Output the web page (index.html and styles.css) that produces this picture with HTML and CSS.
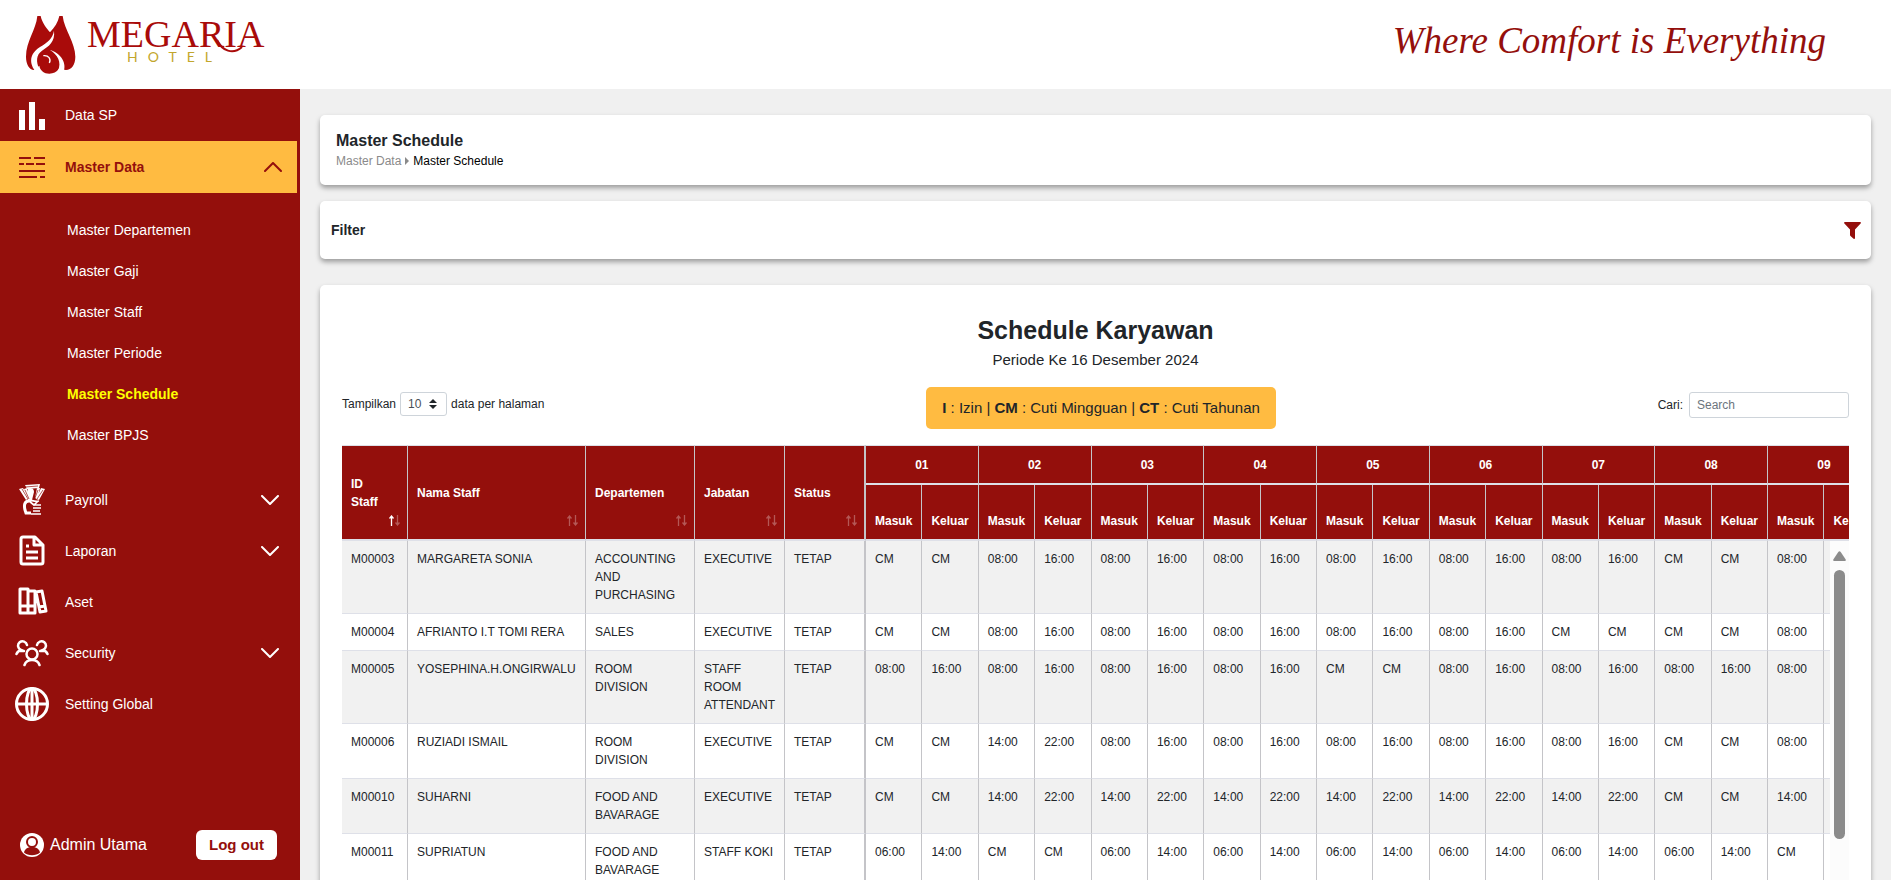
FILE: index.html
```html
<!DOCTYPE html>
<html lang="id">
<head>
<meta charset="utf-8">
<meta name="viewport" content="width=device-width, initial-scale=1">
<title>Master Schedule - Megaria Hotel</title>
<link rel="stylesheet" href="styles.css">
</head>
<body>
<svg class="sprite" aria-hidden="true">
  <symbol id="chevron" viewBox="0 0 18 10"><path d="M1 1l8 8 8-8" fill="none" stroke="currentColor" stroke-width="2" stroke-linecap="round" stroke-linejoin="round"/></symbol>
  <symbol id="sort-up" viewBox="0 0 5 11"><path d="M2.5 11V1M0.5 3.5l2-2.5 2 2.5" fill="none" stroke="currentColor" stroke-width="1.3"/></symbol>
  <symbol id="sort-down" viewBox="0 0 5 11"><path d="M2.5 0v10M0.5 7.5l2 2.5 2-2.5" fill="none" stroke="currentColor" stroke-width="1.3"/></symbol>
</svg>

<header class="topbar">
  <svg class="logo" viewBox="0 0 250 89" role="img" aria-label="Megaria Hotel">
    <g transform="translate(-5 10) scale(.33333)">
      <path d="M52 18h10c4 20 18 37 28 49 14-15 24-30 28-49h10c5 42 38 80 38 122 0 24-12 40-28 40l-22-3c-6 9-16 14-28 14-16 0-28-10-30-24l-16 13c-14 0-24-18-24-40 0-46 30-80 34-122z" fill="#a90b0a"/>
      <path d="M46 184C22 152 36 126 60 111c22-13 38-25 42-49 4 33-16 47-36 60-18 13-18 32-8 56z" fill="#fff"/>
      <path d="M114 182c12-26-2-48-24-62 28 8 50 34 42 62z" fill="#fff"/>
      <path d="M70 137c16-2 24 10 18 22" fill="none" stroke="#fff" stroke-width="4"/>
    </g>
    <text class="logo-name" x="62" y="47">MEGARIA</text>
    <text class="logo-kind" x="102" y="62">HOTEL</text>
    <path d="M192 40c5 11 16 15 25 7" fill="none" stroke="#a90b0a" stroke-width="2"/>
  </svg>
  <p class="slogan">Where Comfort is Everything</p>
</header>

<div class="shell">
  <aside class="sidebar">
    <nav class="menu" aria-label="Menu utama">
      <a class="item" href="#sp">
        <svg class="icon" viewBox="0 0 34 34"><path d="M4 12h6v20H4zM14 4h6v28h-6zM24 21h6v11h-6z" fill="currentColor"/></svg>
        <span>Data SP</span>
      </a>
      <button class="item item-open" type="button" aria-expanded="true">
        <svg class="icon" viewBox="0 0 34 34"><path d="M4 8h12M19 8h11M4 14h5M11 14h8M21 14h9M4 21h26M4 27h18M25 27h5" stroke="currentColor" stroke-width="2"/></svg>
        <span>Master Data</span>
        <svg class="chevron chevron-up"><use href="#chevron"/></svg>
      </button>
      <ul class="submenu">
        <li><a href="#departemen">Master Departemen</a></li>
        <li><a href="#gaji">Master Gaji</a></li>
        <li><a href="#staff">Master Staff</a></li>
        <li><a href="#periode">Master Periode</a></li>
        <li><a class="current" href="#schedule" aria-current="page">Master Schedule</a></li>
        <li><a href="#bpjs">Master BPJS</a></li>
      </ul>
      <button class="item" type="button" aria-expanded="false">
        <svg class="icon" viewBox="0 0 34 34">
          <path d="M10 2l15-1-1 4-12 1zM4 6l4-1 6 10-3 2zM30 6l-4-1-5 11 3 1zM9 6l3-1 3 11-2 1zM25 5l-3 0-2 10 2 1zM13 6c4-2 6 0 6 3l-2 8h-4z" fill="currentColor"/>
          <path d="M10 4l13-1M7 6l6 10M10 7l4 9M28 7l-6 9M23 7l-3 8" stroke="#940f0c" stroke-width=".7"/>
          <path d="M14 18c-5 0-5 5-4 9l1 3h5" fill="none" stroke="currentColor" stroke-width="3"/>
          <path d="M13 17c4 0 6 2 11 1M14 18l5 4 4-4M18 22h8M18 25h8M18 28h7M16 31h10" stroke="currentColor" stroke-width="1.700" fill="none"/>
        </svg>
        <span>Payroll</span>
        <svg class="chevron"><use href="#chevron"/></svg>
      </button>
      <button class="item" type="button" aria-expanded="false">
        <svg class="icon" viewBox="0 0 34 34">
          <path d="M8 3h12l8 8v17a2 2 0 0 1-2 2H8a2 2 0 0 1-2-2V5a2 2 0 0 1 2-2zM19 3v8h9" fill="none" stroke="currentColor" stroke-width="3" stroke-linejoin="round"/>
          <path d="M11 12h3M11 18h12M11 24h12" stroke="currentColor" stroke-width="3"/>
        </svg>
        <span>Laporan</span>
        <svg class="chevron"><use href="#chevron"/></svg>
      </button>
      <a class="item" href="#aset">
        <svg class="icon" viewBox="0 0 34 34">
          <path d="M5 4h8v24H5zM13 6h7v22h-7zM5 21h15M21 7l6-1 4 20-6 1zM24 22l6-1" fill="none" stroke="currentColor" stroke-width="3" stroke-linejoin="round"/>
        </svg>
        <span>Aset</span>
      </a>
      <button class="item" type="button" aria-expanded="false">
        <svg class="icon" viewBox="0 0 34 34">
          <g fill="none" stroke="currentColor" stroke-width="2.500" stroke-linecap="round">
            <circle cx="17" cy="18" r="5.500"/>
            <path d="M9.500 29c1-3 4-5 7.500-5s6.500 2 7.500 5M12 9A4.500 4.500 0 1 0 6 14c-2 .5-3.500 1.500-4.500 4M5 15h4M22 9a4.500 4.500 0 1 1 6 5c2 .5 3.500 1.500 4.500 4M29 15h-4"/>
          </g>
        </svg>
        <span>Security</span>
        <svg class="chevron"><use href="#chevron"/></svg>
      </button>
      <a class="item" href="#setting">
        <svg class="icon" viewBox="0 0 34 34">
          <g fill="none" stroke="currentColor" stroke-width="3"><circle cx="17" cy="17" r="15.500"/><ellipse cx="17" cy="17" rx="5.500" ry="15.500"/><path d="M17 1v32M1 17h32"/></g>
        </svg>
        <span>Setting Global</span>
      </a>
    </nav>
    <div class="account">
      <svg class="avatar" viewBox="0 0 24 24"><circle cx="12" cy="12" r="12" fill="#fff"/><path d="M4 19.500c1-4 4-5.500 8-5.500s7 1.500 8 5.500c-4 3.600-12 3.600-16 0z" fill="#940f0c"/><circle cx="12" cy="9" r="5" fill="#fff" stroke="#940f0c" stroke-width="2"/></svg>
      <span class="user">Admin Utama</span>
      <button class="logout" type="button">Log out</button>
    </div>
  </aside>

  <main class="content">
    <section class="card page-head">
      <h1>Master Schedule</h1>
      <nav class="crumbs" aria-label="Breadcrumb">
        <a href="#master">Master Data</a>
        <svg class="crumb-arrow" viewBox="0 0 4 8"><path d="M0 0l4 4-4 4z" fill="currentColor"/></svg>
        <span>Master Schedule</span>
      </nav>
    </section>

    <section class="card filter">
      <h2>Filter</h2>
      <button class="filter-toggle" type="button" aria-label="Buka filter">
        <svg viewBox="0 0 17 17"><path d="M1 0h15c1 0 1.200 1 .6 1.600L11 7.500V16c0 1-.8 1.200-1.400.7L6.500 14c-.3-.3-.5-.6-.5-1V7.500L.4 1.600C-.2 1 0 0 1 0z" fill="currentColor"/></svg>
      </button>
    </section>

    <section class="card schedule">
      <h2>Schedule Karyawan</h2>
      <p class="period">Periode Ke 16 Desember 2024</p>
      <div class="controls">
        <div class="control length">
          <label for="length">Tampilkan</label>
          <span class="select-wrap">
            <select id="length"><option>10</option><option>25</option><option>50</option></select>
            <svg class="caret" viewBox="0 0 8 10"><path d="M0 4l4-4 4 4zM0 6h8l-4 4z" fill="currentColor"/></svg>
          </span>
          <span>data per halaman</span>
        </div>
        <p class="legend"><b>I</b> : Izin | <b>CM</b> : Cuti Mingguan | <b>CT</b> : Cuti Tahunan</p>
        <div class="control search">
          <label for="search">Cari:</label>
          <input id="search" type="search" placeholder="Search">
        </div>
      </div>

      <div class="grid-head">
        <table class="grid">
          <colgroup><col class="c-id"><col class="c-name"><col class="c-dept"><col class="c-job"><col class="c-status"></colgroup>
          <colgroup span="18"></colgroup>
          <thead>
            <tr class="days">
              <th rowspan="2" class="sorted">ID Staff<span class="sort"><svg class="on"><use href="#sort-up"/></svg><svg><use href="#sort-down"/></svg></span></th>
              <th rowspan="2">Nama Staff<span class="sort"><svg><use href="#sort-up"/></svg><svg><use href="#sort-down"/></svg></span></th>
              <th rowspan="2">Departemen<span class="sort"><svg><use href="#sort-up"/></svg><svg><use href="#sort-down"/></svg></span></th>
              <th rowspan="2">Jabatan<span class="sort"><svg><use href="#sort-up"/></svg><svg><use href="#sort-down"/></svg></span></th>
              <th rowspan="2" class="edge">Status<span class="sort"><svg><use href="#sort-up"/></svg><svg><use href="#sort-down"/></svg></span></th>
              <th colspan="2">01</th><th colspan="2">02</th><th colspan="2">03</th><th colspan="2">04</th><th colspan="2">05</th><th colspan="2">06</th><th colspan="2">07</th><th colspan="2">08</th><th colspan="2">09</th>
            </tr>
            <tr class="times">
              <th>Masuk</th><th>Keluar</th><th>Masuk</th><th>Keluar</th><th>Masuk</th><th>Keluar</th><th>Masuk</th><th>Keluar</th><th>Masuk</th><th>Keluar</th><th>Masuk</th><th>Keluar</th><th>Masuk</th><th>Keluar</th><th>Masuk</th><th>Keluar</th><th>Masuk</th><th>Keluar</th>
            </tr>
          </thead>
        </table>
      </div>
      <div class="grid-body">
        <div class="grid-view">
          <table class="grid">
            <colgroup><col class="c-id"><col class="c-name"><col class="c-dept"><col class="c-job"><col class="c-status"></colgroup>
            <colgroup span="18"></colgroup>
            <tbody>
              <tr><td>M00003</td><td>MARGARETA SONIA</td><td>ACCOUNTING AND PURCHASING</td><td>EXECUTIVE</td><td class="edge">TETAP</td><td>CM</td><td>CM</td><td>08:00</td><td>16:00</td><td>08:00</td><td>16:00</td><td>08:00</td><td>16:00</td><td>08:00</td><td>16:00</td><td>08:00</td><td>16:00</td><td>08:00</td><td>16:00</td><td>CM</td><td>CM</td><td>08:00</td><td></td></tr>
              <tr><td>M00004</td><td>AFRIANTO I.T TOMI RERA</td><td>SALES</td><td>EXECUTIVE</td><td class="edge">TETAP</td><td>CM</td><td>CM</td><td>08:00</td><td>16:00</td><td>08:00</td><td>16:00</td><td>08:00</td><td>16:00</td><td>08:00</td><td>16:00</td><td>08:00</td><td>16:00</td><td>CM</td><td>CM</td><td>CM</td><td>CM</td><td>08:00</td><td></td></tr>
              <tr><td>M00005</td><td>YOSEPHINA.H.ONGIRWALU</td><td>ROOM DIVISION</td><td>STAFF ROOM ATTENDANT</td><td class="edge">TETAP</td><td>08:00</td><td>16:00</td><td>08:00</td><td>16:00</td><td>08:00</td><td>16:00</td><td>08:00</td><td>16:00</td><td>CM</td><td>CM</td><td>08:00</td><td>16:00</td><td>08:00</td><td>16:00</td><td>08:00</td><td>16:00</td><td>08:00</td><td></td></tr>
              <tr><td>M00006</td><td>RUZIADI ISMAIL</td><td>ROOM DIVISION</td><td>EXECUTIVE</td><td class="edge">TETAP</td><td>CM</td><td>CM</td><td>14:00</td><td>22:00</td><td>08:00</td><td>16:00</td><td>08:00</td><td>16:00</td><td>08:00</td><td>16:00</td><td>08:00</td><td>16:00</td><td>08:00</td><td>16:00</td><td>CM</td><td>CM</td><td>08:00</td><td></td></tr>
              <tr><td>M00010</td><td>SUHARNI</td><td>FOOD AND BAVARAGE</td><td>EXECUTIVE</td><td class="edge">TETAP</td><td>CM</td><td>CM</td><td>14:00</td><td>22:00</td><td>14:00</td><td>22:00</td><td>14:00</td><td>22:00</td><td>14:00</td><td>22:00</td><td>14:00</td><td>22:00</td><td>14:00</td><td>22:00</td><td>CM</td><td>CM</td><td>14:00</td><td></td></tr>
              <tr><td>M00011</td><td>SUPRIATUN</td><td>FOOD AND BAVARAGE</td><td>STAFF KOKI</td><td class="edge">TETAP</td><td>06:00</td><td>14:00</td><td>CM</td><td>CM</td><td>06:00</td><td>14:00</td><td>06:00</td><td>14:00</td><td>06:00</td><td>14:00</td><td>06:00</td><td>14:00</td><td>06:00</td><td>14:00</td><td>06:00</td><td>14:00</td><td>CM</td><td></td></tr>
            </tbody>
          </table>
        </div>
        <div class="scrollbar" aria-hidden="true">
          <svg class="scroll-up" viewBox="0 0 13 10"><path d="M5.300 1q1.200-1.500 2.400 0l5 7.500q.6 1.500-1 1.500H1.300q-1.600 0-1-1.500z" fill="#8b8b8b"/></svg>
          <div class="thumb"></div>
        </div>
      </div>
    </section>
  </main>
</div>
</body>
</html>
```

FILE: styles.css
```css
:root {
  --red: #940f0c;
  --amber: #ffbb41;
  --ink: #212529;
  --line: #c4c4c8;
  --rule: #dee0e8;
}

* { box-sizing: border-box; }

body {
  margin: 0;
  height: 100vh;
  display: flex;
  flex-direction: column;
  overflow: hidden;
  font-family: "Liberation Sans", Arial, sans-serif;
  font-size: 12px;
  line-height: 18px;
  color: var(--ink);
  background: #f0f0f0;
}

h1, h2, p, ul { margin: 0; padding: 0; }
button { font: inherit; color: inherit; border: 0; background: none; cursor: pointer; }
a { color: inherit; text-decoration: none; }
svg { display: block; flex: none; }

.sprite { position: absolute; width: 0; height: 0; }

/* Top bar */
.topbar {
  flex: none;
  display: flex;
  align-items: flex-start;
  justify-content: space-between;
  height: 89px;
  padding: 0 65px 0 25px;
  background: #fff;
}
.logo { width: 250px; height: 89px; }
.logo-name { font-family: "Liberation Serif", serif; font-size: 38px; fill: #a90b0a; }
.logo-kind { font-family: Lato, sans-serif; font-size: 14px; letter-spacing: 10px; fill: #c2a62c; }
.slogan {
  padding-top: 17px;
  font-family: "Liberation Serif", serif;
  font-style: italic;
  font-size: 37px;
  line-height: 48px;
  color: var(--red);
}

.shell { flex: 1; display: flex; min-height: 0; }

/* Sidebar */
.sidebar {
  flex: none;
  display: flex;
  flex-direction: column;
  justify-content: space-between;
  width: 300px;
  padding-right: 3px;
  background: var(--red);
  color: #fff;
  font-size: 14px;
}
.item {
  display: flex;
  align-items: center;
  gap: 16px;
  width: 100%;
  height: 51px;
  padding: 0 15px;
  text-align: left;
}
.item:first-child, .item-open { height: 52px; }
.item-open { background: var(--amber); color: var(--red); font-weight: bold; }
.icon { width: 34px; height: 34px; }
.chevron { width: 18px; height: 10px; margin: 0 3px 0 auto; }
.chevron-up { transform: rotate(180deg); margin-right: 0; }
.submenu { list-style: none; padding: 17px 0 18px 67px; }
.submenu a { display: block; line-height: 41px; }
.submenu .current { color: #ff0; font-weight: bold; }
.account {
  display: flex;
  align-items: center;
  gap: 6px;
  padding: 0 20px 20px;
  font-size: 16px;
}
.avatar { width: 24px; height: 24px; }
.logout {
  width: 81px;
  height: 30px;
  margin-left: auto;
  padding: 0;
  border-radius: 6px;
  background: #fff;
  color: var(--red);
  font-size: 15px;
  font-weight: bold;
}

/* Content */
.content { flex: 1; min-width: 0; overflow: hidden; padding: 26px 20px 0; }
.card {
  border-radius: 5px;
  background: #fff;
  box-shadow: 0 3px 5px rgba(0, 0, 0, .35);
}
.page-head { padding: 15px 16px; }
.page-head h1 { font-size: 16px; line-height: 22px; }
.crumbs { display: flex; align-items: center; gap: 4px; color: #000; }
.crumbs a, .crumb-arrow { color: #8a8a8a; }
.crumb-arrow { width: 4px; height: 8px; }
.filter {
  display: flex;
  align-items: center;
  justify-content: space-between;
  height: 58px;
  margin-top: 16px;
  padding: 0 10px 0 11px;
}
.filter h2 { font-size: 14px; }
.filter-toggle { padding: 0; color: var(--red); }
.filter-toggle svg { width: 17px; height: 17px; }

.schedule { margin-top: 26px; padding: 30px 22px; }
.schedule h2 { font-size: 25px; line-height: 30px; text-align: center; }
.period { margin-top: 4px; font-size: 15px; line-height: 22px; text-align: center; }

.controls { display: flex; justify-content: space-between; align-items: flex-start; margin: 16px 0; }
.control { display: flex; align-items: center; padding-top: 5px; }
.length { gap: 4px; }
.search { gap: 6px; }
.legend {
  padding: 10px 16px;
  border-radius: 5px;
  background: var(--amber);
  font-size: 15px;
  line-height: 22px;
}
.select-wrap { position: relative; }
.select-wrap select {
  appearance: none;
  display: block;
  width: 47px;
  height: 24px;
  padding: 0 7px;
  border: 1px solid #ced4da;
  border-radius: 3px;
  background: #fff;
  color: #495057;
  font: inherit;
}
.caret { position: absolute; right: 10px; top: 7px; width: 8px; height: 10px; pointer-events: none; }
.search input {
  width: 160px;
  height: 26px;
  padding: 0 7px;
  border: 1px solid #ced4da;
  border-radius: 3px;
  font: inherit;
}
.search input::placeholder { color: #6c757d; }

/* Schedule table */
.grid-head { overflow: hidden; }
.grid { table-layout: fixed; width: 1539px; border-collapse: separate; border-spacing: 0; }
.c-id { width: 66px; }
.c-name { width: 178px; }
.c-dept { width: 109px; }
.c-job { width: 90px; }
.c-status { width: 81px; }
.grid th {
  position: relative;
  padding: 9px;
  border-right: 1px solid var(--line);
  border-bottom: 2px solid var(--rule);
  background: var(--red);
  color: #fff;
  text-align: left;
  vertical-align: middle;
}
.days th { height: 40px; border-top: 1px solid var(--rule); }
.days th[colspan] { text-align: center; }
.times th { height: 56px; padding-right: 0; vertical-align: bottom; }
.grid .sorted { padding-right: 20px; }
.grid .edge { border-right-width: 2px; }
.sort { position: absolute; right: 7px; bottom: 13px; display: flex; gap: 1px; }
.sort svg { width: 5px; height: 11px; opacity: .3; }
.sort .on { opacity: 1; }

.grid-body { display: flex; }
.grid-view { flex: 1; min-width: 0; overflow: hidden; }
.grid td {
  padding: 9px;
  border-right: 1px solid var(--line);
  border-bottom: 1px solid var(--rule);
  vertical-align: top;
}
.grid td:nth-child(2) { white-space: nowrap; }
.grid tbody tr:nth-child(odd) { background: #f1f1f1; }
.scrollbar {
  display: flex;
  flex-direction: column;
  align-items: center;
  gap: 9px;
  width: 19px;
  padding-top: 10px;
  background: #fcfcfc;
}
.scroll-up { width: 13px; height: 10px; }
.thumb { width: 11px; height: 269px; border-radius: 6px; background: #8b8b8b; }
```
